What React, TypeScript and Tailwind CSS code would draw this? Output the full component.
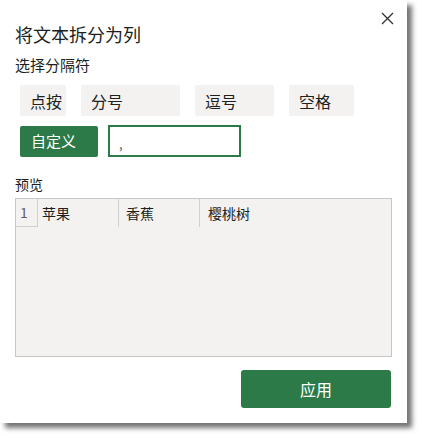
const font = { fontFamily: '"Noto Sans CJK SC", "Noto Sans", sans-serif' };

function Chip({ label, w }: { label: string; w: string }) {
  return (
    <div className={`flex h-[31px] ${w} items-center rounded-[2px] bg-[#f3f2f1] pl-[10px] text-[16px] text-[#201f1e]`}>
      {label}
    </div>
  );
}

export default function App() {
  return (
    <div className="h-[438px] w-[422px] bg-white" style={font}>
      <div className="relative h-[423px] w-[407px] bg-white px-[15px] shadow-[5px_5px_5px_rgba(0,0,0,0.55)]">
        <button className="absolute right-[13px] top-[11px] flex h-[14px] w-[14px] items-center justify-center text-[#323130]">
          <svg width="13" height="13" viewBox="0 0 13 13">
            <path d="M1 1L12 12M12 1L1 12" stroke="currentColor" strokeWidth="1.3" />
          </svg>
        </button>

        <div className="pt-[22px] text-[18px] leading-[24px] text-[#201f1e]">将文本拆分为列</div>
        <div className="mt-[9px] text-[15px] leading-[20px] text-[#201f1e]">选择分隔符</div>

        <div className="ml-[5px] mt-[10px] flex gap-[15px]">
          <Chip label="点按" w="w-[46px]" />
          <Chip label="分号" w="w-[99px]" />
          <Chip label="逗号" w="w-[79px]" />
          <Chip label="空格" w="w-[65px]" />
        </div>

        <div className="ml-[5px] mt-[9px] flex items-center gap-[10px]">
          <div className="flex h-[31px] w-[78px] items-center rounded-[2px] bg-[#2b7a47] pl-[11px] text-[15px] text-white">
            自定义
          </div>
          <div className="flex h-[32px] w-[133px] items-end border-2 border-[#2b7a47] bg-white pb-[3px] pl-[9px] text-[13px] leading-[16px] text-[#605e5c]">
            ,
          </div>
        </div>

        <div className="mt-[17px] text-[14px] leading-[20px] text-[#201f1e]">预览</div>

        <div className="mt-[4px] h-[159px] w-[377px] border border-[#c8c6c4] bg-[#f3f2f1]">
          <div className="flex h-[28px] text-[14px] text-[#201f1e]">
            <div className="flex w-[22px] items-center border-b border-r border-[#d2d0ce] pl-[4px] text-[#605e5c]">1</div>
            <div className="flex w-[81px] items-center border-r border-[#d2d0ce] pl-[4px]">苹果</div>
            <div className="flex w-[81px] items-center border-r border-[#d2d0ce] pl-[7px]">香蕉</div>
            <div className="flex items-center pl-[8px]">樱桃树</div>
          </div>
        </div>

        <div className="mt-[13px] flex justify-end pr-[1px]">
          <button className="flex h-[38px] w-[150px] items-center justify-center rounded-[3px] bg-[#2b7a47] text-[16px] text-white">
            应用
          </button>
        </div>
      </div>
    </div>
  );
}
